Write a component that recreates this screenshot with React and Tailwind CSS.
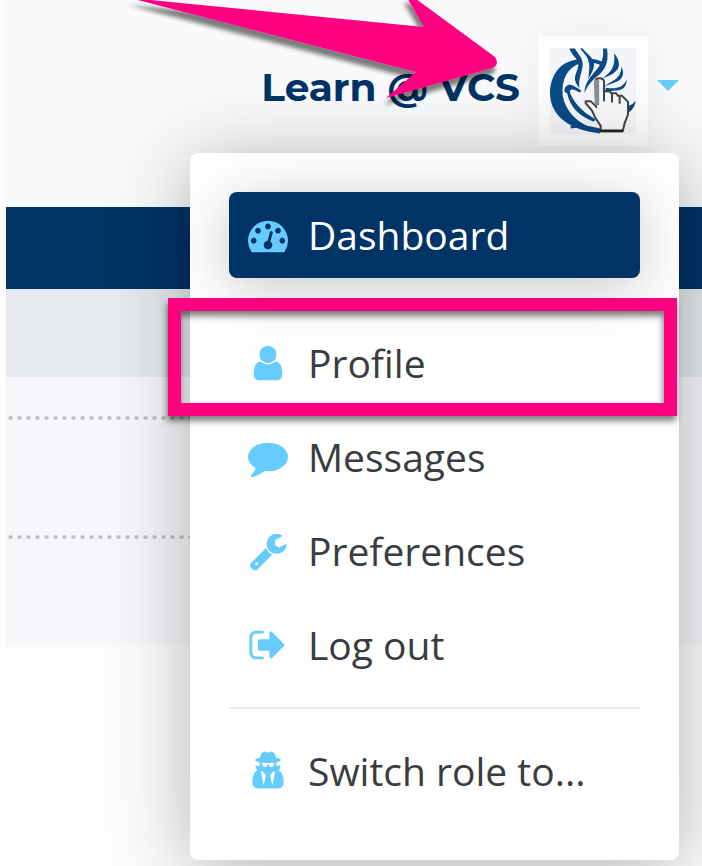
// App.jsx
import React from 'react';

const ICONS = {
  dashboard:
    'M384 1152q0-53-37.5-90.5t-90.5-37.5-90.5 37.5-37.5 90.5 37.5 90.5 90.5 37.5 90.5-37.5 37.5-90.5zm192-448q0-53-37.5-90.5t-90.5-37.5-90.5 37.5-37.5 90.5 37.5 90.5 90.5 37.5 90.5-37.5 37.5-90.5zm428 481l101-382q6-26-7.5-48.5t-38.5-29.5-48 6.5-30 39.5l-101 382q-60 5-107 43.5t-63 98.5q-20 77 20 146t117 89 146-20 89-117q16-60-6-117t-72-91zm660-33q0-53-37.5-90.5t-90.5-37.5-90.5 37.5-37.5 90.5 37.5 90.5 90.5 37.5 90.5-37.5 37.5-90.5zm-640-640q0-53-37.5-90.5t-90.5-37.5-90.5 37.5-37.5 90.5 37.5 90.5 90.5 37.5 90.5-37.5 37.5-90.5zm448 192q0-53-37.5-90.5t-90.5-37.5-90.5 37.5-37.5 90.5 37.5 90.5 90.5 37.5 90.5-37.5 37.5-90.5zm320 448q0 261-141 483-19 29-54 29h-1402q-35 0-54-29-141-221-141-483 0-182 71-348t191-286 286-191 348-71 348 71 286 191 191 286 71 348z',
  user: 'M1536 1399q0 109-62.5 187t-150.5 78h-854q-88 0-150.5-78t-62.5-187q0-85 8.5-160.5t31.5-152 58.5-131 94-89 134.5-34.5q131 128 313 128t313-128q76 0 134.5 34.5t94 89 58.5 131 31.5 152 8.5 160.5zm-256-887q0 159-112.5 271.5t-271.5 112.5-271.5-112.5-112.5-271.5 112.5-271.5 271.5-112.5 271.5 112.5 112.5 271.5z',
  comment:
    'M1792 896q0 174-120 321.5t-326 233-450 85.5q-70 0-145-8-198 175-460 242-49 14-114 22-17 2-30.5-9t-17.5-29v-1q-3-4-.5-12t2-10 4.5-9.5l6-9 7-8.5 8-9q7-8 31-34.5t34.5-38 31-39.5 32.5-51 27-59 26-76q-157-89-247.5-220t-90.5-281q0-174 120-321.5t326-233 450-85.5 450 85.5 326 233 120 321.5z',
  wrench:
    'M448 1472q0-26-19-45t-45-19-45 19-19 45 19 45 45 19 45-19 19-45zm644-420l-682 682q-37 37-90 37-52 0-91-37l-106-108q-38-36-38-90 0-53 38-91l681-681q39 98 114.5 173.5t173.5 114.5zm634-435q0 39-23 106-47 134-164.5 217.5t-258.5 83.5q-185 0-316.5-131.5t-131.5-316.5 131.5-316.5 316.5-131.5q58 0 121.5 16.5t107.5 46.5q16 11 16 28t-16 28l-293 169v224l193 107q5-3 79-48.5t135.5-81 70.5-35.5q15 0 23.5 10t8.5 25z',
  signOut:
    'M704 1440q0 4 1 20t.5 26.5-3 23.5-10 19.5-20.5 6.5h-320q-119 0-203.5-84.5t-84.5-203.5v-704q0-119 84.5-203.5t203.5-84.5h320q13 0 22.5 9.5t9.5 22.5q0 4 1 20t.5 26.5-3 23.5-10 19.5-20.5 6.5h-320q-66 0-113 47t-47 113v704q0 66 47 113t113 47h312l11.5 1 11.5 3 8 5.5 7 9 2 13.5zm928-544q0 26-19 45l-544 544q-19 19-45 19t-45-19-19-45v-288h-448q-26 0-45-19t-19-45v-384q0-26 19-45t45-19h448v-288q0-26 19-45t45-19 45 19l544 544q19 19 19 45z',
  secret:
    'M704 1536l96-448-96-128-128-64zm384 0l128-640-128 64-96 128zm104-993q-2-4-4-6-10-8-96-8-70 0-167 19-7 2-21 2t-21-2q-97-19-167-19-86 0-96 8-2 2-4 6 2 18 4 27 2 3 7.5 6.5t7.5 10.5q2 4 7.5 20.5t7 20.5 7.5 17 8.5 17 9 14 12 13.5 14 9.5 17.5 8 20.5 4 24.5 2q36 0 59-12.5t32.5-30 14.5-34.5 11.5-29.5 17.5-12.5h12q11 0 17.5 12.5t11.5 29.5 14.5 34.5 32.5 30 59 12.5q13 0 24.5-2t20.5-4 17.5-8 14-9.5 12-13.5 9-14 8.5-17 7.5-17 7-20.5 7.5-20.5q2-7 7.5-10.5t7.5-6.5q2-9 4-27zm408 879q0 121-73 190t-194 69h-874q-121 0-194-69t-73-190q0-61 4.5-118t19-125.5 37.5-123.5 63.5-103.5 93.5-74.5l-90-220h214q-22-64-22-128 0-12 2-32-194-40-194-96 0-57 210-99 17-62 51.5-134t70.5-114q32-37 76-37 30 0 84 31t84 31 84-31 84-31q44 0 76 37 36 42 70.5 114t51.5 134q210 42 210 99 0 56-194 96 7 81-20 160h214l-82 225q63 33 107.5 96.5t65.5 143.5 29 151.5 8 157.5z',
};

const Icon = ({ name }) => (
  <svg viewBox="0 0 1792 1792" className="size-10 shrink-0 fill-[#66ccff]" aria-hidden="true">
    <path d={ICONS[name]} />
  </svg>
);

const Avatar = () => (
  <span className="block bg-[#fdfdfd] p-3">
    <svg viewBox="90 144 258 255" className="size-[86px] bg-[#f3f5f8]" role="img" aria-label="VCS">
      <g fill="#0a4a86">
        <path d="M180 177C122 178 90 224 90 280C92 345 145 388 240 399L238 386C180 378 136 334 128 284C124 236 142 200 182 188Z" />
        <path d="M148 144C156 166 176 176 175 194C173 214 160 224 167 246L178 264C174 234 188 214 188 190C187 168 172 160 165 144Z" />
        <path d="M180 144C194 160 209 174 208 200L205 236C216 216 226 198 221 184C214 166 196 156 188 144Z" />
        <path d="M205 173C226 175 242 180 256 189L252 199C238 190 222 186 206 186Z" />
        <path d="M249 144H261C266 176 260 200 242 218C222 236 202 250 194 278C193 250 208 234 224 214C244 192 252 174 249 144Z" />
        <path d="M282 158C300 178 302 200 286 214C276 224 262 228 248 234C268 216 288 204 282 158Z" />
        <path d="M304 198C316 222 306 240 284 246L252 258C276 240 304 236 304 198Z" />
        <path d="M320 238C320 260 306 272 284 270L254 276L258 262C286 266 308 264 320 238Z" />
        <path d="M133 272C134 256 144 249 158 254L184 270L180 276C166 268 154 262 149 272C156 296 172 316 198 338L226 356L222 364C182 350 150 322 142 280Z" />
        <path d="M347 300C344 322 332 334 318 340L322 318C334 314 342 308 347 300Z" />
        <path d="M152 376C178 370 200 374 240 384V395C208 386 180 378 152 384Z" />
      </g>
      <path
        d="M226 244Q226 233 238 233Q252 233 252 244V272H268L274 278H288L294 286H306L324 304V342L314 368L308 392H242V376L226 352L216 330L197 308V302H212L228 318Z"
        fill="#f8f9fa"
        stroke="#444"
        strokeWidth="6"
      />
      <path d="M231 238V314" stroke="#8a8f94" strokeWidth="13" />
      <path d="M252 244V302M276 278V306M299 286V310" stroke="#444" strokeWidth="6" />
      <path d="M240 391H308" stroke="#222" strokeWidth="8" />
    </svg>
  </span>
);

const MenuItem = ({ icon, label, active, highlighted }) => (
  <li className="relative">
    <a
      href="#"
      className={
        active
          ? 'flex h-[86px] items-center gap-5 rounded-lg bg-[#003366] px-[19px] text-white shadow-[0_10px_60px_rgba(0,0,0,0.22)]'
          : 'flex h-[86px] items-center gap-5 rounded-lg px-[19px] text-[#3a3d40]'
      }
    >
      <Icon name={icon} />
      {label}
    </a>
    {highlighted && (
      <span className="pointer-events-none absolute -top-[22px] -right-[37px] -bottom-[10px] -left-[61px] border-[13px] border-[#ff0080] drop-shadow-[-1px_5px_3px_rgba(0,0,0,0.5)]" />
    )}
  </li>
);

const UserMenu = () => (
  <ul className="absolute top-[153px] right-[23px] flex w-[489px] max-w-full flex-col gap-2 rounded-lg bg-white px-[39px] pt-[39px] pb-[46px] text-[39px] leading-[54px] shadow-[0_10px_80px_rgba(0,0,0,0.3)]">
    <MenuItem icon="dashboard" label="Dashboard" active />
    <li role="separator" className="my-3 h-0.5 bg-[#e6ebef]" />
    <MenuItem icon="user" label="Profile" highlighted />
    <MenuItem icon="comment" label="Messages" />
    <MenuItem icon="wrench" label="Preferences" />
    <MenuItem icon="signOut" label="Log out" />
    <li role="separator" className="my-[11px] h-0.5 bg-[#e6ebef]" />
    <MenuItem icon="secret" label="Switch role to..." />
  </ul>
);

const DottedLine = () => (
  <div className="h-1 bg-[radial-gradient(circle,#bdbdbd_1px,transparent_3px)] bg-size-[9px_4px]" />
);

const Arrow = () => (
  <svg
    viewBox="0 0 400 120"
    className="pointer-events-none absolute top-0 right-[182px] h-[120px] w-[400px] overflow-visible"
    aria-hidden="true"
  >
    <defs>
      <filter id="arrow-shadow" x="-10%" y="-10%" width="120%" height="130%">
        <feDropShadow dx="-2" dy="7" stdDeviation="2" floodColor="#000" floodOpacity="0.5" />
      </filter>
    </defs>
    <path
      d="M10 -2L304 27L286 -4L292 -4L375 57Q380 65 372 68L266 98L296 72L10 -2Z"
      fill="#ff0080"
      filter="url(#arrow-shadow)"
    />
  </svg>
);

const App = () => {
  return (
    <div className="relative min-h-screen overflow-hidden bg-[#fdfdfd] pl-1.5 font-['Open_Sans',sans-serif]">
      <header className="flex h-[207px] justify-end bg-[#f8fafc] pt-9 pr-[23px]">
        <button type="button" className="flex h-[110px] items-center gap-[9px]">
          <span className="mr-[9px] mb-2 font-['Montserrat','Inter',sans-serif] text-[39px] leading-[54px] font-bold whitespace-nowrap text-[#003366]">
            Learn @ VCS
          </span>
          <span className="shadow-[0_0_40px_rgba(0,0,0,0.06)]">
            <Avatar />
          </span>
          <svg viewBox="0 0 22 11" className="mb-3 h-[11px] w-[22px] fill-[#66ccff]" aria-hidden="true">
            <path d="M0 0H22L11 11Z" />
          </svg>
        </button>
      </header>
      <nav className="h-[82px] bg-[#003366]" />
      <div className="h-[88px] bg-[#e6eaee]" />
      <main className="flex h-[268px] flex-col bg-[#f5f7fa] pt-[39px] pr-6">
        <DottedLine />
        <div className="h-[115px]" />
        <DottedLine />
      </main>
      <UserMenu />
      <Arrow />
    </div>
  );
};

export default App;
